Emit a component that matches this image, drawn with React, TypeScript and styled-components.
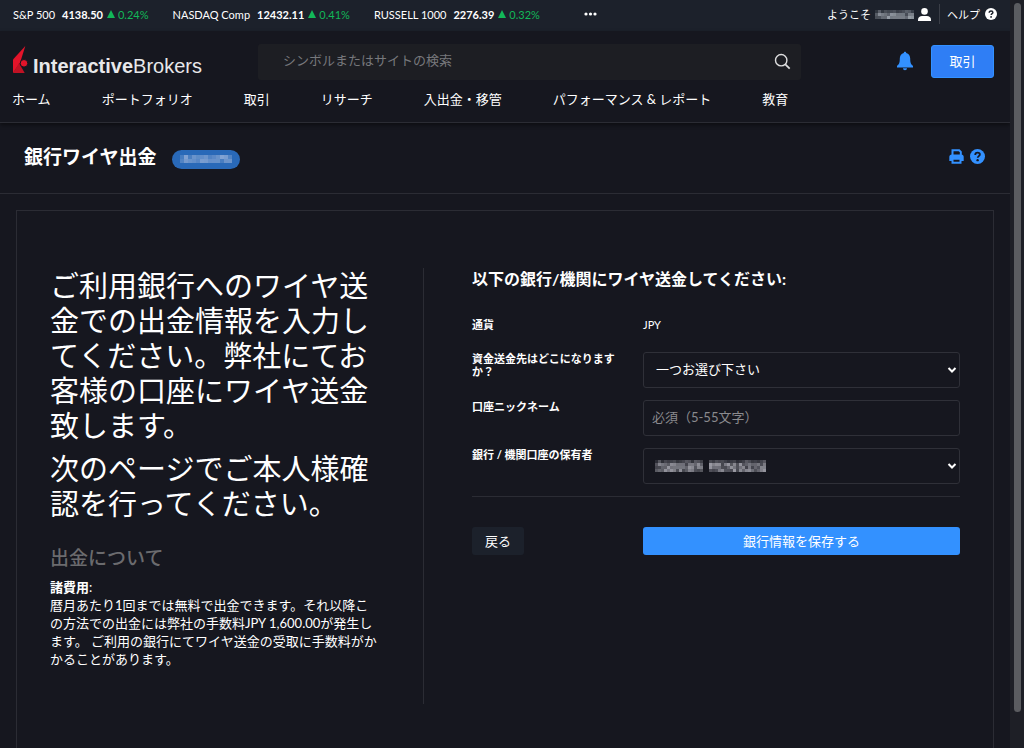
import React from "react";
import styled, { createGlobalStyle } from "styled-components";

const c = {
  page: "#16171f",
  bar: "#1c212b",
  line: "#2b2c34",
  text: "#ffffff",
  muted: "#8a8a8e",
  blue: "#3391ff",
  green: "#12b858",
};

const Global = createGlobalStyle`
  * { box-sizing: border-box; }
  html { overflow: hidden; }
  body { margin: 0; background: ${c.page}; }
  body, button, input, select {
    font-family: Lato, "Noto Sans CJK JP", sans-serif;
    color: ${c.text};
  }
  h1, h2, h3, p { margin: 0; }
  a { color: inherit; text-decoration: none; }
`;

const Page = styled.div`
  display: flex;
  height: 100vh;
  overflow: hidden;
  font-size: 13px;
`;
const Content = styled.div`
  flex: 1;
  min-width: 0;
  display: flex;
  flex-direction: column;
`;
const ScrollTrack = styled.div`
  flex: none;
  width: 14px;
  padding: 3px 3px 36px 4px;
  background: #1e1f26;
  display: flex;
`;
const ScrollThumb = styled.div`
  flex: 1;
  border-radius: 4px;
  background: #5b5c60;
`;

const TopBar = styled.div`
  flex: none;
  height: 31px;
  padding: 0 13px 3px;
  background: ${c.bar};
  display: flex;
  align-items: center;
  justify-content: space-between;
  font-size: 11px;
`;
const Tickers = styled.div`
  display: flex;
  align-items: center;
  gap: 24px;
  white-space: nowrap;
`;
const Ticker = styled.div`
  display: flex;
  align-items: center;
`;
const Price = styled.b`
  margin: 0 4px 0 7px;
`;
const Change = styled.span`
  color: ${c.green};
  display: flex;
  align-items: center;
  gap: 3px;
`;
const MoreButton = styled.button`
  border: 0;
  padding: 0;
  margin-left: 20px;
  background: none;
  display: flex;
`;
const Account = styled.div`
  display: flex;
  align-items: center;
  gap: 5px;
`;
const Welcome = styled.a`
  display: flex;
  align-items: center;
  gap: 4px;
  padding-right: 8px;
  border-right: 1px solid #3a3e47;
  height: 20px;
`;
const HelpLink = styled.a`
  display: flex;
  align-items: center;
  gap: 5px;
  padding-left: 2px;
`;

const Header = styled.header`
  flex: none;
  border-bottom: 1px solid ${c.line};
  box-shadow: 0 2px 4px rgba(0, 0, 0, 0.45);
  padding: 13px 16px 13px 12px;
`;
const HeaderRow = styled.div`
  display: flex;
  align-items: center;
  height: 36px;
`;
const Logo = styled.a`
  flex: none;
  width: 246px;
  height: 36px;
  display: flex;
  align-items: flex-end;
  gap: 5px;
  padding-bottom: 4px;
`;
const LogoText = styled.span`
  font-family: "Liberation Sans", sans-serif;
  font-size: 20px;
  line-height: 20px;
  color: #e8e8ea;
`;
const Search = styled.label`
  flex: 1;
  max-width: 543px;
  height: 36px;
  padding: 0 10px 2px 25px;
  border-radius: 3px;
  background: #1d1e23;
  display: flex;
  align-items: center;
`;
const SearchInput = styled.input`
  flex: 1;
  min-width: 0;
  border: 0;
  padding: 0 0 2px;
  outline: 0;
  background: none;
  font-size: 13px;
  &::placeholder { color: #77787c; opacity: 1; }
`;
const HeaderActions = styled.div`
  margin-left: auto;
  padding-bottom: 2px;
  display: flex;
  align-items: center;
  gap: 17px;
`;
const IconButton = styled.button`
  border: 0;
  padding: 0;
  background: none;
  display: flex;
`;
const TradeButton = styled.button`
  width: 63px;
  height: 33px;
  padding: 0 0 2px;
  border: 1px solid #3391ff;
  border-radius: 3px;
  background: #2f7ef5;
  font-size: 13px;
`;
const Nav = styled.nav`
  display: flex;
  gap: 51px;
  margin-top: 9px;
  line-height: 20px;
  white-space: nowrap;
`;

const TitleBar = styled.div`
  flex: none;
  height: 71px;
  padding: 0 25px 0 24px;
  border-bottom: 1px solid ${c.line};
  display: flex;
  align-items: center;
`;
const Title = styled.h1`
  padding-bottom: 2px;
  font-size: 19px;
  line-height: 28px;
  font-weight: 700;
`;
const Pill = styled.span`
  margin: 2px 0 0 16px;
  width: 68px;
  height: 19px;
  border-radius: 10px;
  background: #2969b8;
  display: flex;
  align-items: center;
  justify-content: center;
`;
const TitleActions = styled.div`
  margin-left: auto;
  padding-bottom: 4px;
  display: flex;
  gap: 6px;
`;

const Card = styled.main`
  flex: 1;
  margin: 16px 16px 0;
  padding: 57px 33px 44px;
  border: 1px solid ${c.line};
  border-bottom: 0;
  display: grid;
  grid-template-columns: 374fr 488fr;
  column-gap: 48px;
`;
const Intro = styled.section`
  border-right: 1px solid ${c.line};
  padding-right: 44px;
`;
const Lead = styled.p`
  font-size: 29px;
  line-height: 35px;
  margin-bottom: 8px;
`;
const SubHeading = styled.h3`
  margin: 23px 0 6px;
  font-size: 19px;
  line-height: 28px;
  font-weight: 500;
  color: #6b6b6e;
`;
const Note = styled.p`
  font-size: 13px;
  line-height: 18px;
`;

const Form = styled.form`
  min-width: 0;
`;
const FormTitle = styled.h2`
  font-size: 16px;
  line-height: 22px;
  font-weight: 700;
  margin-bottom: 28px;
`;
const Row = styled.div`
  display: grid;
  grid-template-columns: 147px 1fr;
  column-gap: 24px;
  min-height: 22px;
  margin-bottom: 12px;
`;
const Label = styled.label`
  font-size: 11px;
  line-height: 13px;
  font-weight: 700;
`;
const Value = styled.output`
  font-size: 11px;
  line-height: 13px;
`;
const Control = styled.div`
  position: relative;
`;
const fieldBox = `
  display: block;
  width: 100%;
  height: 36px;
  border: 1px solid #2f3038;
  border-radius: 3px;
  background: transparent;
  font-size: 13px;
  outline: 0;
`;
const Select = styled.select`
  ${fieldBox}
  appearance: none;
  padding: 0 24px 2px 12px;
`;
const TextInput = styled.input`
  ${fieldBox}
  padding: 0 8px 2px;
  &::placeholder { color: ${c.muted}; opacity: 1; }
`;
const Overlay = styled.span<{ $side: "left" | "right" }>`
  position: absolute;
  top: 0;
  bottom: 0;
  ${(p) => (p.$side === "left" ? "left: 12px;" : "right: 3px;")}
  display: flex;
  align-items: center;
  pointer-events: none;
`;
const Actions = styled(Row)`
  border-top: 1px solid ${c.line};
  padding-top: 30px;
`;
const Button = styled.button<{ $primary?: boolean }>`
  justify-self: ${(p) => (p.$primary ? "stretch" : "start")};
  height: 28px;
  padding: 0 13px 2px;
  border: 0;
  border-radius: 3px;
  background: ${(p) => (p.$primary ? c.blue : c.bar)};
  font-size: 13px;
`;

const MosaicSvg = styled.svg`
  display: block;
`;

type MosaicProps = { cols: number; rows: number; cell: number; color: string; gapAt?: number };

/* Pixelated stand-in for a private value; gapAt leaves a word space. */
function Mosaic({ cols, rows, cell, color, gapAt = -9 }: MosaicProps) {
  const cells: React.ReactElement[] = [];
  for (let y = 0; y < rows; y++) {
    for (let x = 0; x < cols; x++) {
      if (x === gapAt || x === gapAt + 1) continue;
      const n = Math.sin(x * 12.9898 + y * 78.233) * 43758.5453;
      const v = n - Math.floor(n);
      const edge = y === 0 && rows > 2 ? 0.5 : 1;
      cells.push(
        <rect
          key={`${x}-${y}`}
          x={x * cell}
          y={y * cell}
          width={cell}
          height={cell}
          fill={color}
          opacity={(0.3 + v * 0.6) * edge}
        />
      );
    }
  }
  return (
    <MosaicSvg width={cols * cell} height={rows * cell} aria-hidden="true">
      {cells}
    </MosaicSvg>
  );
}

const Question = ({ size, fg, bg }: { size: number; fg: string; bg: string }) => (
  <svg width={size} height={size} viewBox="0 0 14 14" aria-hidden="true">
    <circle cx="7" cy="7" r="7" fill={bg} />
    <path d="M4.9 5.5c0-1.3.9-2.1 2.2-2.1s2.1.8 2.1 1.8c0 1.5-2 1.4-2 3" fill="none" stroke={fg} strokeWidth="1.7" />
    <circle cx="7.1" cy="10.4" r="1.1" fill={fg} />
  </svg>
);

const Chevron = () => (
  <svg width="10" height="8" viewBox="0 0 10 8" aria-hidden="true">
    <path d="M1.5 2 5 5.5 8.5 2" fill="none" stroke="#fff" strokeWidth="2" />
  </svg>
);

const tickers = [
  ["S&P 500", "4138.50", "0.24%"],
  ["NASDAQ Comp", "12432.11", "0.41%"],
  ["RUSSELL 1000", "2276.39", "0.32%"],
];
const navItems = ["ホーム", "ポートフォリオ", "取引", "リサーチ", "入出金・移管", "パフォーマンス & レポート", "教育"];

export default function App() {
  return (
    <Page>
      <Global />
      <Content>
        <TopBar>
          <Tickers>
            {tickers.map(([name, price, change]) => (
              <Ticker key={name}>
                {name}
                <Price>{price}</Price>
                <Change>
                  <svg width="8" height="8" viewBox="0 0 8 8" aria-hidden="true">
                    <path d="M4 0 8 8H0z" fill={c.green} />
                  </svg>
                  {change}
                </Change>
              </Ticker>
            ))}
            <MoreButton type="button" aria-label="その他">
              <svg width="13" height="4" viewBox="0 0 13 4">
                <g fill="#fff">
                  <circle cx="2" cy="2" r="1.6" />
                  <circle cx="6.5" cy="2" r="1.6" />
                  <circle cx="11" cy="2" r="1.6" />
                </g>
              </svg>
            </MoreButton>
          </Tickers>
          <Account>
            <Welcome href="#">
              ようこそ
              <Mosaic cols={13} rows={3} cell={3} color="#a9b0b8" />
              <svg width="13" height="13" viewBox="0 0 13 13" aria-hidden="true">
                <circle cx="6.5" cy="3.4" r="3.3" fill="#fff" />
                <path d="M0 13v-1.5c0-2 2-3.5 4-3.5h5c2 0 4 1.5 4 3.5V13z" fill="#fff" />
              </svg>
            </Welcome>
            <HelpLink href="#">
              ヘルプ
              <Question size={12} fg={c.bar} bg="#fff" />
            </HelpLink>
          </Account>
        </TopBar>

        <Header>
          <HeaderRow>
            <Logo href="#" aria-label="InteractiveBrokers">
              <svg width="16" height="30" viewBox="0 0 16 30" aria-hidden="true">
                <path d="M13.3 0 1 13.5V27L8 17z" fill="#e3142a" />
                <path d="M1 27 7 17l5.7 10z" fill="#c01224" />
                <circle cx="12" cy="17.3" r="3.8" fill="#e3142a" stroke={c.page} strokeWidth="1" />
              </svg>
              <LogoText>
                <b>Interactive</b>Brokers
              </LogoText>
            </Logo>
            <Search>
              <SearchInput type="search" aria-label="検索" placeholder="シンボルまたはサイトの検索" />
              <svg width="17" height="17" viewBox="0 0 17 17" aria-hidden="true">
                <circle cx="7.2" cy="7.2" r="5.7" fill="none" stroke="#dededf" strokeWidth="1.4" />
                <path d="m11.3 11.3 4.4 4.4" stroke="#dededf" strokeWidth="1.7" />
              </svg>
            </Search>
            <HeaderActions>
              <IconButton type="button" aria-label="通知">
                <svg width="18" height="20" viewBox="0 0 18 20">
                  <path
                    d="M9 0.7c.8 0 1.2.5 1.2 1.2 2.7.7 4 2.8 4 5.6 0 4.6 1 6 2.8 7.4V16.5H1v-1.6c1.8-1.4 2.8-2.8 2.8-7.4 0-2.8 1.3-4.9 4-5.6 0-.7.4-1.2 1.2-1.2zM7 17.3h4c0 1.2-.8 2-2 2s-2-.8-2-2z"
                    fill={c.blue}
                  />
                </svg>
              </IconButton>
              <TradeButton type="button">取引</TradeButton>
            </HeaderActions>
          </HeaderRow>
          <Nav>
            {navItems.map((item) => (
              <a key={item} href="#">
                {item}
              </a>
            ))}
          </Nav>
        </Header>

        <TitleBar>
          <Title>銀行ワイヤ出金</Title>
          <Pill>
            <Mosaic cols={13} rows={2} cell={4} color="#8fabd6" />
          </Pill>
          <TitleActions>
            <IconButton type="button" aria-label="印刷">
              <svg width="15" height="15" viewBox="0 0 15 15">
                <path d="M3.5 6V1.2h6.6l1.7 1.7V6" fill="none" stroke={c.blue} strokeWidth="2" />
                <path d="M0.3 12V8q0-2.5 2.5-2.5h9.4q2.5 0 2.5 2.5v4z" fill={c.blue} />
                <path d="M3.5 9.8h8v3.9h-8z" fill={c.page} stroke={c.blue} strokeWidth="2" />
              </svg>
            </IconButton>
            <IconButton type="button" aria-label="ヘルプ">
              <Question size={15} fg={c.page} bg={c.blue} />
            </IconButton>
          </TitleActions>
        </TitleBar>

        <Card>
          <Intro>
            <Lead>ご利用銀行へのワイヤ送金での出金情報を入力してください。弊社にてお客様の口座にワイヤ送金致します。</Lead>
            <Lead>次のページでご本人様確認を行ってください。</Lead>
            <SubHeading>出金について</SubHeading>
            <Note>
              <b>諸費用</b>:
            </Note>
            <Note>
              暦月あたり1回までは無料で出金できます。それ以降この方法での出金には弊社の手数料JPY 1,600.00が発生します。 ご利用の銀行にてワイヤ送金の受取に手数料がかかることがあります。
            </Note>
          </Intro>
          <Form onSubmit={(e) => e.preventDefault()}>
            <FormTitle>以下の銀行/機関にワイヤ送金してください:</FormTitle>
            <Row>
              <Label htmlFor="currency">通貨</Label>
              <Value id="currency">JPY</Value>
            </Row>
            <Row>
              <Label htmlFor="destination">資金送金先はどこになりますか？</Label>
              <Control>
                <Select id="destination">
                  <option>一つお選び下さい</option>
                </Select>
                <Overlay $side="right">
                  <Chevron />
                </Overlay>
              </Control>
            </Row>
            <Row>
              <Label htmlFor="nickname">口座ニックネーム</Label>
              <TextInput id="nickname" type="text" placeholder="必須（5-55文字）" />
            </Row>
            <Row>
              <Label htmlFor="holder">銀行 / 機関口座の保有者</Label>
              <Control>
                <Select id="holder" />
                <Overlay $side="left">
                  <Mosaic cols={37} rows={4} cell={3} color="#a9a9b2" gapAt={16} />
                </Overlay>
                <Overlay $side="right">
                  <Chevron />
                </Overlay>
              </Control>
            </Row>
            <Actions>
              <Button type="button">戻る</Button>
              <Button type="submit" $primary>
                銀行情報を保存する
              </Button>
            </Actions>
          </Form>
        </Card>
      </Content>
      <ScrollTrack>
        <ScrollThumb />
      </ScrollTrack>
    </Page>
  );
}
